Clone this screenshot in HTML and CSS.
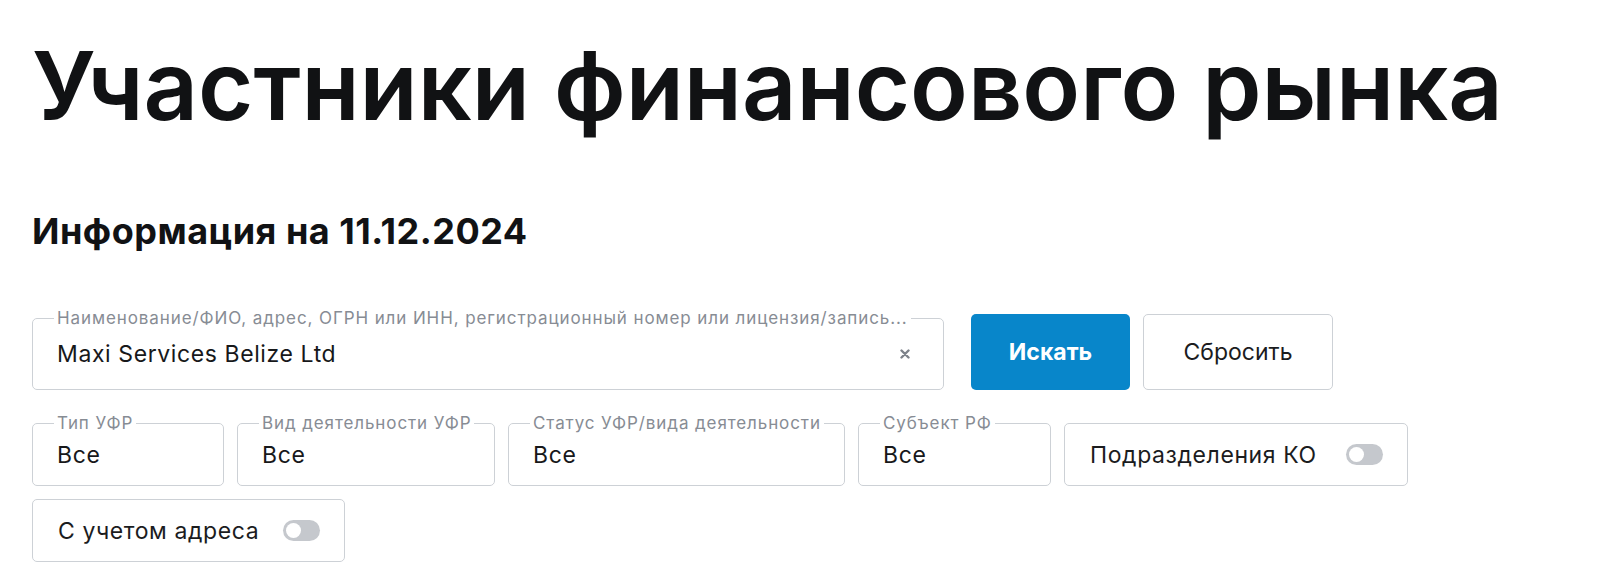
FILE: index.html
```html
<!DOCTYPE html>
<html lang="ru">
<head>
    <meta charset="UTF-8">
    <meta name="viewport" content="width=device-width, initial-scale=1.0">
    <title>Участники финансового рынка</title>
    <link rel="stylesheet" href="styles.css">
</head>
<body>
    <h1 class="page-title">Участники финансового рынка</h1>
    <h2 class="info-date">Информация на 11.12.2024</h2>

    <form class="search" onsubmit="return false">
        <div class="search-row">
            <fieldset class="field field-search">
                <legend>Наименование/ФИО, адрес, ОГРН или ИНН, регистрационный номер или лицензия/запись...</legend>
                <div class="field-value">
                    <span class="value-text">Maxi Services Belize Ltd</span>
                    <svg class="clear-icon" width="10" height="10" viewBox="0 0 10 10">
                        <path d="M1.5 1.5 L8.5 8.5 M8.5 1.5 L1.5 8.5" stroke="#7d828a" stroke-width="2.4" stroke-linecap="round"/>
                    </svg>
                </div>
            </fieldset>
            <button class="btn btn-primary" type="submit">Искать</button>
            <button class="btn btn-secondary" type="reset">Сбросить</button>
        </div>

        <div class="filters">
            <fieldset class="field field-type">
                <legend>Тип УФР</legend>
                <div class="field-value">Все</div>
            </fieldset>
            <fieldset class="field field-activity">
                <legend>Вид деятельности УФР</legend>
                <div class="field-value">Все</div>
            </fieldset>
            <fieldset class="field field-status">
                <legend>Статус УФР/вида деятельности</legend>
                <div class="field-value">Все</div>
            </fieldset>
            <fieldset class="field field-region">
                <legend>Субъект РФ</legend>
                <div class="field-value">Все</div>
            </fieldset>
            <label class="switch-box switch-branches">
                <span>Подразделения КО</span>
                <span class="switch"></span>
            </label>
            <label class="switch-box switch-address">
                <span>С учетом адреса</span>
                <span class="switch"></span>
            </label>
        </div>
    </form>
</body>
</html>
```

FILE: styles.css
```css
body {
    margin: 0;
    padding: 38px 32px 0;
    font-family: Inter, "Noto Sans", sans-serif;
    color: #1b1c1e;
    background: #fff;
}
.page-title {
    margin: 0;
    font-size: 95px;
    line-height: 1;
    font-weight: 600;
    color: #111214;
}
.info-date {
    margin: 77px 0 0;
    font-size: 36px;
    line-height: 42px;
    font-weight: 700;
    letter-spacing: 0.5px;
    color: #111214;
}
.search {
    margin-top: 57px;
}
.search-row {
    display: flex;
    align-items: flex-end;
}
.field {
    margin: 0;
    padding: 0 21px;
    min-width: 0;
    border: 1px solid #cdd1d6;
    border-radius: 5px;
    box-sizing: border-box;
}
.field legend {
    padding: 0 3px;
    font-size: 17px;
    line-height: 18px;
    letter-spacing: 0.9px;
    color: #878c94;
    white-space: nowrap;
}
.field-value {
    font-size: 23px;
    line-height: 24px;
    letter-spacing: 0.6px;
    color: #17181a;
    padding: 11px 3px 18px;
}
.field-search {
    width: 912px;
}
.field-search .field-value {
    display: flex;
    align-items: center;
    justify-content: space-between;
    padding: 15px 3px 23px;
}
.clear-icon {
    margin-right: 9px;
}
.btn {
    height: 76px;
    border-radius: 5px;
    font-family: inherit;
    font-size: 23px;
    cursor: pointer;
}
.btn-primary {
    width: 159px;
    margin-left: 27px;
    border: none;
    background-color: #0886ca;
    color: #fff;
    font-weight: 700;
}
.btn-secondary {
    width: 190px;
    margin-left: 13px;
    border: 1px solid #cdd1d6;
    background-color: #fff;
    color: #1b1c1e;
}
.filters {
    display: flex;
    flex-wrap: wrap;
    align-items: flex-end;
    gap: 13px;
    margin-top: 24px;
}
.field-type { width: 192px; }
.field-activity { width: 258px; }
.field-status { width: 337px; }
.field-region { width: 193px; }
.switch-box {
    display: flex;
    align-items: center;
    justify-content: space-between;
    height: 63px;
    padding: 0 24px 0 25px;
    border: 1px solid #cdd1d6;
    border-radius: 5px;
    box-sizing: border-box;
    font-size: 23px;
    letter-spacing: 0.6px;
    color: #1b1c1e;
}
.switch-branches { width: 344px; }
.switch-address { width: 313px; }
.switch {
    position: relative;
    width: 37px;
    height: 21px;
    border-radius: 11px;
    background-color: #c5c8cd;
}
.switch::after {
    content: "";
    position: absolute;
    left: 3px;
    top: 3px;
    width: 15px;
    height: 15px;
    border-radius: 50%;
    background-color: #fff;
}
```
